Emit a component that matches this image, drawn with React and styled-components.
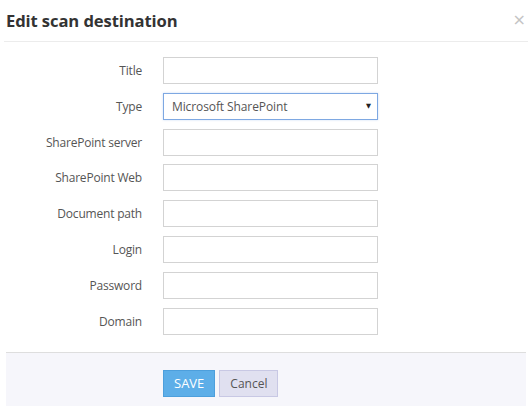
import React from 'react';
import styled, { createGlobalStyle } from 'styled-components';

const GlobalStyle = createGlobalStyle`
  body {
    margin: 0;
    background: #fff;
    font-family: "Open Sans", "Noto Sans", sans-serif;
  }
`;

const fields = [
  'Title',
  'Type',
  'SharePoint server',
  'SharePoint Web',
  'Document path',
  'Login',
  'Password',
  'Domain',
];

function App() {
  return (
    <Modal>
      <GlobalStyle />
      <Header>
        <Heading>Edit scan destination</Heading>
        <Close>×</Close>
      </Header>
      <Body>
        {fields.map((label) => (
          <Row key={label}>
            <Label>{label}</Label>
            {label === 'Type' ? (
              <Select>
                <span>Microsoft SharePoint</span>
                <Caret>▼</Caret>
              </Select>
            ) : (
              <Input type={label === 'Password' ? 'password' : 'text'} />
            )}
          </Row>
        ))}
      </Body>
      <Footer>
        <Button primary>SAVE</Button>
        <Button>Cancel</Button>
      </Footer>
    </Modal>
  );
}

export default App;

const Modal = styled.div`
  width: 528px;
  height: 406px;
  display: flex;
  flex-direction: column;
  overflow: hidden;
`;

const Header = styled.div`
  display: flex;
  justify-content: space-between;
  align-items: center;
  height: 41px;
  margin: 0 0 0 4px;
  padding: 0 0 0 2px;
  border-bottom: 1px solid #ececec;
`;

const Heading = styled.h1`
  margin: 0;
  font-size: 16.6px;
  font-weight: 700;
  color: #333;
  letter-spacing: -0.1px;
`;

const Close = styled.span`
  font-family: "DejaVu Sans", sans-serif;
  font-size: 16px;
  color: #c4c4c4;
  margin-right: 2px;
  margin-top: -2px;
`;

const Body = styled.div`
  display: flex;
  flex-direction: column;
  gap: 8.8px;
  padding: 15px 0 17px;
`;

const Row = styled.div`
  display: grid;
  grid-template-columns: 142px 215px;
  column-gap: 21px;
  align-items: center;
`;

const Label = styled.label`
  text-align: right;
  font-size: 12px;
  letter-spacing: -0.2px;
  color: #555;
`;

const Input = styled.input`
  box-sizing: border-box;
  height: 27px;
  width: 215px;
  margin: 0;
  border: 1px solid #d3d3d3;
  background: #fff;
  outline: none;
`;

const Select = styled.div`
  box-sizing: border-box;
  height: 27px;
  width: 215px;
  display: flex;
  align-items: center;
  justify-content: space-between;
  padding: 0 6px 0 8px;
  border: 1px solid #7ea8e2;
  box-shadow: 0 0 2px rgba(102, 153, 230, 0.35);
  font-size: 12px;
  letter-spacing: -0.1px;
  color: #555;
`;

const Caret = styled.span`
  font-family: "DejaVu Sans", sans-serif;
  font-size: 6.5px;
  color: #222;
`;

const Footer = styled.div`
  flex: 1;
  display: flex;
  gap: 4px;
  margin: 0 2px 0 6px;
  padding: 17px 0 0 157px;
  background: #f6f6fb;
  border-top: 1px solid #dedede;
`;

const Button = styled.button`
  box-sizing: border-box;
  height: 27px;
  padding: 0 10px;
  font-family: "Open Sans", "Noto Sans", sans-serif;
  font-size: ${(p) => (p.primary ? '13px' : '12px')};
  color: ${(p) => (p.primary ? '#fff' : '#555')};
  background: ${(p) => (p.primary ? '#5daee8' : '#e0e0f0')};
  border: 1px solid ${(p) => (p.primary ? '#4d9fdc' : '#c8c8e4')};
  border-radius: 0;
  cursor: pointer;
`;
